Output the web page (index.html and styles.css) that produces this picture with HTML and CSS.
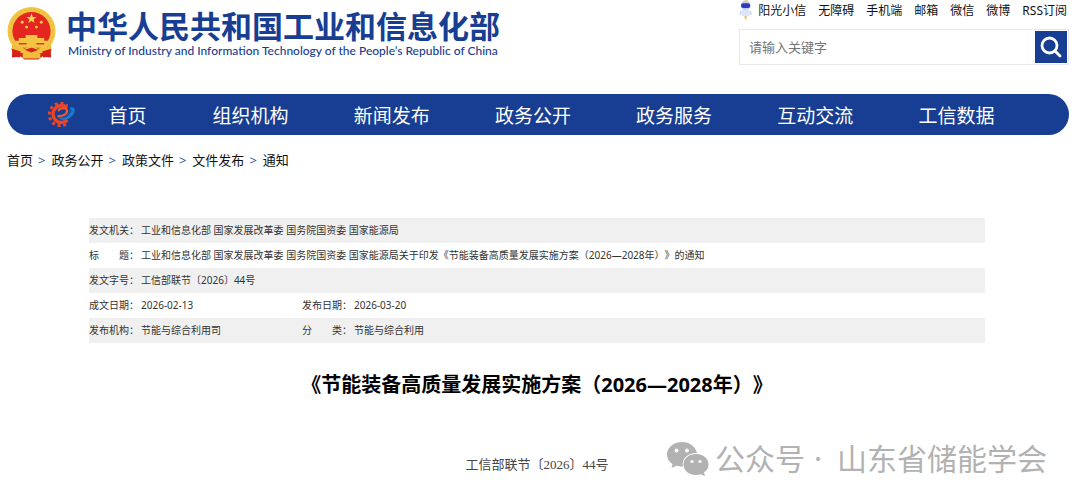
FILE: index.html
```html
<!DOCTYPE html>
<html lang="zh-CN">
<head>
<meta charset="utf-8">
<title>中华人民共和国工业和信息化部</title>
<link rel="stylesheet" href="styles.css">
</head>
<body>
<header class="header">
  <a class="brand" href="#">
    <svg class="emblem" viewBox="0 0 50 54" aria-hidden="true">
      <path d="M6 37 5 52 14 51 18 54H32L36 51 45 52 44 37Z" fill="#d8201c"/>
      <circle cx="25" cy="25" r="24.500" fill="#f2c644"/>
      <circle cx="25" cy="25" r="22" fill="none" stroke="#e8b335" stroke-width="1" stroke-dasharray="3 2"/>
      <circle cx="25" cy="25" r="19.500" fill="#e52620"/>
      <path d="m25 7 1.300 3.700h3.900L27.100 13l1.200 3.700L25 14.500l-3.300 2.200 1.200-3.700-3.100-2.300h3.900Z" fill="#ffd94f"/>
      <g fill="#ffd34c"><circle cx="15.500" cy="16" r="1.500"/><circle cx="20" cy="21" r="1.500"/><circle cx="30" cy="21" r="1.500"/><circle cx="35" cy="16" r="1.500"/></g>
      <path d="M19 29h12v3h7v4H12v-4h7Z" fill="#f4c544"/>
      <path d="M8 35h34l-4 7H12Z" fill="#f4c544"/>
      <path d="M12 38h8M30 38h8" stroke="#dc3a24" stroke-width="1.500"/>
      <path d="M6 38q5 5 12 5l7-3 7 3q7 0 12-5l2 6-7 4-8-1-6 3-6-3-8 1-7-4Z" fill="#f1bd3c"/>
      <path d="M5 43 14 46 13 52 6 51ZM45 43 36 46 37 52 44 51ZM18 44l7-2 7 2-7 3Z" fill="#d9201c"/>
      <path d="M16 48h18v5H16Z" fill="#f1bd3c"/>
    </svg>
    <span class="brand-text">
      <span class="brand-cn">中华人民共和国工业和信息化部</span>
      <span class="brand-en">Ministry of Industry and Information Technology of the People’s Republic of China</span>
    </span>
  </a>
  <div class="tools">
    <div class="quick">
      <svg class="robot" viewBox="0 0 14 20" aria-hidden="true">
        <path d="M4 9h6l2 4-1 3-3 1-1 3-1-3-3-1-1-4Z" fill="#dce5fa"/>
        <path d="m2 11-1 4M12 11l1 4" stroke="#c8d7f5" stroke-width="1.500"/>
        <circle cx="7" cy="5" r="4.800" fill="#bdcdf5"/>
        <rect x="2" y="3" width="10" height="5" rx="2.500" fill="#3039bd"/>
        <path d="M6 0h3M6 17h2l-1 3Z" fill="#f5c765" stroke="#f5c765"/>
      </svg>
      <a href="#">阳光小信</a><a href="#">无障碍</a><a href="#">手机端</a><a href="#">邮箱</a><a href="#">微信</a><a href="#">微博</a><a href="#">RSS订阅</a>
    </div>
    <form class="search">
      <input class="search-input" type="text" placeholder="请输入关键字" aria-label="请输入关键字">
      <button class="search-button" type="button" aria-label="搜索">
        <svg viewBox="0 0 32 32" fill="none" stroke="#fff" stroke-width="2.800" stroke-linecap="round"><circle cx="14.500" cy="14.500" r="7.500"/><path d="m20 20 5 5"/></svg>
      </button>
    </form>
  </div>
</header>

<nav class="nav">
  <svg class="gear" viewBox="0 0 27 27" aria-hidden="true">
    <g fill="none">
      <circle cx="12.500" cy="13.500" r="11.200" stroke="#ed4427" stroke-width="3" stroke-dasharray="3 2.860" pathLength="70.320" />
      <path d="M20 3 28 1V27L18 21 17 16Z" fill="#173e92"/>
      <path d="M19.500 19A8.500 8.500 0 1 1 19 6.500" stroke="#ed4427" stroke-width="3.400"/>
      <path d="M9.500 15C15 15.500 19.500 13 19 9.500 18.500 6.500 13 6 10 10" stroke="#f1552c" stroke-width="2.200"/>
    </g>
    <path d="M9 15.500C15 18 22.500 14 22 6.500 26 5.500 27.500 8 26.500 11 24 18.500 13.500 22 9 15.500Z" fill="#1c78cb"/>
    <path d="M15 16.500c5-1 8-4.500 8-8.500" fill="none" stroke="#173e92" stroke-width="1"/>
  </svg>
  <a href="#">首页</a><a href="#">组织机构</a><a href="#">新闻发布</a><a href="#">政务公开</a><a href="#">政务服务</a><a href="#">互动交流</a><a href="#">工信数据</a>
</nav>

<div class="crumbs">
  <a href="#">首页</a><span class="sep">&gt;</span><a href="#">政务公开</a><span class="sep">&gt;</span><a href="#">政策文件</a><span class="sep">&gt;</span><a href="#">文件发布</a><span class="sep">&gt;</span><a href="#">通知</a>
</div>

<main class="article">
  <table class="meta">
    <tbody>
      <tr><th scope="row">发文机关：</th><td colspan="3">工业和信息化部 国家发展改革委 国务院国资委 国家能源局</td></tr>
      <tr><th scope="row">标　　题：</th><td colspan="3">工业和信息化部 国家发展改革委 国务院国资委 国家能源局关于印发《节能装备高质量发展实施方案（2026—2028年）》的通知</td></tr>
      <tr><th scope="row">发文字号：</th><td colspan="3">工信部联节〔2026〕44号</td></tr>
      <tr><th scope="row">成文日期：</th><td class="short">2026-02-13</td><th scope="row">发布日期：</th><td>2026-03-20</td></tr>
      <tr><th scope="row">发布机构：</th><td class="short">节能与综合利用司</td><th scope="row">分　　类：</th><td>节能与综合利用</td></tr>
    </tbody>
  </table>
  <h1 class="title">《节能装备高质量发展实施方案（2026—2028年）》</h1>
  <p class="doc-no">工信部联节〔2026〕44号</p>
</main>

<div class="watermark">
  <svg class="wechat" viewBox="0 0 42 34" aria-hidden="true">
    <path d="M15 0C6.500 0 0 5.500 0 12.500c0 4 2 7.300 5.500 9.600L4.500 26l5-2.300c2 .6 4 .9 6.500.8C14 16 22 10.500 30 11 28.500 4.500 22.500 0 15 0Z" fill="#b2b2b2"/>
    <path d="M29 12c-7.200 0-12.500 4.600-12.500 10.500S21.800 33 29 33c1.700 0 3.300-.3 4.700-.8L38 34l-1-3.500c3-2 4.500-4.800 4.500-8C41.500 16.600 36.200 12 29 12Z" fill="#b2b2b2"/>
    <g fill="#fff"><circle cx="9.500" cy="8.500" r="1.900"/><circle cx="20" cy="8.500" r="1.900"/><circle cx="25" cy="19.500" r="1.600"/><circle cx="33" cy="19.500" r="1.600"/></g>
  </svg>
  <span>公众号</span><span class="dot">·</span><span>山东省储能学会</span>
</div>
</body>
</html>
```

FILE: styles.css
```css
* { box-sizing: border-box; }

body {
  position: relative;
  min-height: 100vh;
  margin: 0;
  padding: 0 11px 0 7px;
  background: #fff;
  color: #111;
  font-family: "Noto Sans", "Noto Sans CJK SC", sans-serif;
  font-size: 13px;
  text-spacing-trim: space-all;
}

a { color: inherit; text-decoration: none; }

.header {
  display: flex;
  justify-content: space-between;
  height: 94px;
}

.brand {
  display: flex;
  align-items: flex-start;
  gap: 10px;
  padding-top: 6px;
  color: #173e92;
}

.emblem { width: 49px; height: 54px; }

.brand-text { display: flex; flex-direction: column; white-space: nowrap; }

.brand-cn {
  font-family: "Noto Sans CJK SC", sans-serif;
  font-size: 31px;
  font-weight: 700;
  line-height: 37px;
}

.brand-en {
  padding-left: 2px;
  font-family: Lato, "Noto Sans", sans-serif;
  font-size: 12px;
  font-weight: 500;
  line-height: 15px;
}

.tools { width: 330px; }

.quick {
  display: flex;
  justify-content: flex-end;
  gap: 12px;
  height: 29px;
  padding: 0 2px 0 0;
  font-size: 12px;
  line-height: 22px;
  white-space: nowrap;
}

.robot { width: 14px; height: 20px; margin-right: -6px; }

.search {
  display: flex;
  height: 36px;
  margin: 0;
  padding: 1px;
  border: 1px solid #e8e8e8;
}

.search-input {
  flex: 1;
  min-width: 0;
  padding: 0 8px;
  border: 0;
  background: none;
  color: #333;
  font: inherit;
}

.search-input::placeholder { color: #757575; opacity: 1; }

.search-button {
  width: 32px;
  height: 32px;
  padding: 0;
  border: 0;
  background: #173e92;
}

.search-button svg { display: block; }

.nav {
  display: grid;
  grid-template-columns: 27px 105px repeat(6, 1fr);
  align-items: center;
  height: 41px;
  padding: 0 42px 0 41px;
  border-radius: 21px;
  background: #173e92;
  color: #fff;
  font-size: 19px;
  text-align: center;
  white-space: nowrap;
}

.gear { width: 27px; height: 27px; }

.crumbs {
  display: flex;
  padding-top: 15px;
  line-height: 20px;
}

.sep { padding: 0 6px 0 5px; color: #2a56a8; }

.article { padding: 48px 84px 0 82px; }

.meta {
  width: 100%;
  border-collapse: collapse;
  color: #333;
  font-size: 10px;
  line-height: 15px;
}

.meta tr { height: 25px; }

.meta tr:nth-child(odd) { background: #f0f0f0; }

.meta th,
.meta td { padding: 0; text-align: left; white-space: nowrap; }

.meta th { width: 52px; font-weight: 400; }

.meta .short { width: 161px; }

.title {
  margin: 27px 0 0;
  color: #000;
  font-size: 20px;
  line-height: 30px;
  text-align: center;
}

.doc-no {
  margin: 55px 0 0;
  color: #444;
  font-family: "Liberation Serif", "Noto Sans CJK SC", serif;
  font-size: 13px;
  line-height: 20px;
  text-align: center;
}

.watermark {
  position: absolute;
  right: 33px;
  bottom: 21px;
  display: flex;
  align-items: center;
  color: #b2b2b2;
  font-size: 30px;
  line-height: 44px;
}

.wechat { width: 42px; height: 34px; margin-right: 6px; }

.dot { width: 32px; padding-left: 9px; }
```
